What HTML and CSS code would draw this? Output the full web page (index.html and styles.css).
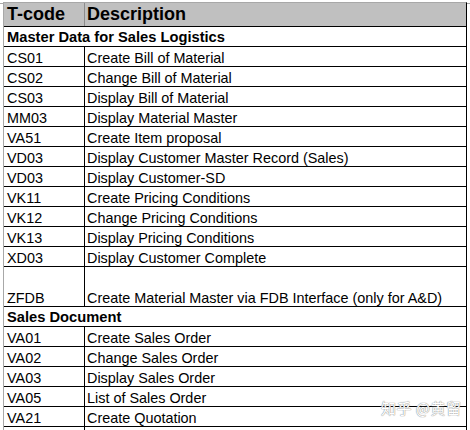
FILE: index.html
```html
<!DOCTYPE html>
<html>
<head>
<meta charset="utf-8">
<link rel="stylesheet" href="styles.css">
</head>
<body>
<div class="page">
  <div class="sheet">
    <div class="row head">
      <div class="c1">T-code</div>
      <div class="c2">Description</div>
    </div>
    <div class="row section"><div class="span">Master Data for Sales Logistics</div></div>
    <div class="row"><div class="c1">CS01</div><div class="c2">Create Bill of Material</div></div>
    <div class="row"><div class="c1">CS02</div><div class="c2">Change Bill of Material</div></div>
    <div class="row"><div class="c1">CS03</div><div class="c2">Display Bill of Material</div></div>
    <div class="row"><div class="c1">MM03</div><div class="c2">Display Material Master</div></div>
    <div class="row"><div class="c1">VA51</div><div class="c2">Create Item proposal</div></div>
    <div class="row"><div class="c1">VD03</div><div class="c2">Display Customer Master Record (Sales)</div></div>
    <div class="row"><div class="c1">VD03</div><div class="c2">Display Customer-SD</div></div>
    <div class="row"><div class="c1">VK11</div><div class="c2">Create Pricing Conditions</div></div>
    <div class="row"><div class="c1">VK12</div><div class="c2">Change Pricing Conditions</div></div>
    <div class="row"><div class="c1">VK13</div><div class="c2">Display Pricing Conditions</div></div>
    <div class="row"><div class="c1">XD03</div><div class="c2">Display Customer Complete</div></div>
    <div class="row tall"><div class="c1">ZFDB</div><div class="c2">Create Material Master via FDB Interface (only for A&amp;D)</div></div>
    <div class="row section"><div class="span">Sales Document</div></div>
    <div class="row"><div class="c1">VA01</div><div class="c2">Create Sales Order</div></div>
    <div class="row"><div class="c1">VA02</div><div class="c2">Change Sales Order</div></div>
    <div class="row"><div class="c1">VA03</div><div class="c2">Display Sales Order</div></div>
    <div class="row"><div class="c1">VA05</div><div class="c2">List of Sales Order</div></div>
    <div class="row"><div class="c1">VA21</div><div class="c2">Create Quotation</div></div>
    <div class="row"><div class="c1"></div><div class="c2"></div></div>
  </div>
  <div class="watermark">知乎 @黄留</div>
</div>
</body>
</html>
```

FILE: styles.css
```css
html, body {
  margin: 0;
  padding: 0;
  background: #ffffff;
}
.page {
  position: relative;
  width: 470px;
  height: 430px;
  overflow: hidden;
  padding-top: 3px;
  padding-left: 3px;
  box-sizing: border-box;
  font-family: "Liberation Sans", Arial, sans-serif;
  color: #000;
}
.page::before {
  content: "";
  position: absolute;
  left: 0;
  right: 0;
  top: 3px;
  height: 1px;
  background: #a8a8a8;
}
.sheet {
  width: 464px;
  border-left: 1px solid #a8a8a8;
  border-top: 1px solid #a8a8a8;
  border-right: 1px solid #000;
  box-sizing: border-box;
  margin-top: -1px;
  position: relative;
}
.row {
  display: grid;
  grid-template-columns: 81px 1fr;
  height: 20px;
  border-bottom: 1px solid #000;
  box-sizing: border-box;
  font-size: 14.4px;
  line-height: 16px;
}
.row > div {
  display: flex;
  align-items: flex-end;
  white-space: nowrap;
}
.c1 {
  padding-left: 3px;
  border-right: 1px solid #000;
}
.c2 {
  padding-left: 2px;
}
.head {
  height: 24px;
  background: #c0c0c0;
  font-size: 18px;
  line-height: 20px;
  font-weight: bold;
}
.head > div {
  padding-bottom: 2px;
}
.head .c1 {
  border-right-color: #8c8c8c;
}
.section {
  grid-template-columns: 1fr;
  font-weight: bold;
  font-size: 14.7px;
}
.section > .span {
  padding-left: 3px;
  padding-bottom: 1px;
}
.tall {
  height: 40px;
}
.watermark {
  position: absolute;
  left: 381px;
  top: 399px;
  font-family: "Noto Sans CJK SC", sans-serif;
  font-size: 15px;
  line-height: 18px;
  color: #ffffff;
  text-shadow: 0 0 1px #8a8a8a, 0 0 1px #8a8a8a;
  letter-spacing: 0.5px;
}
```
